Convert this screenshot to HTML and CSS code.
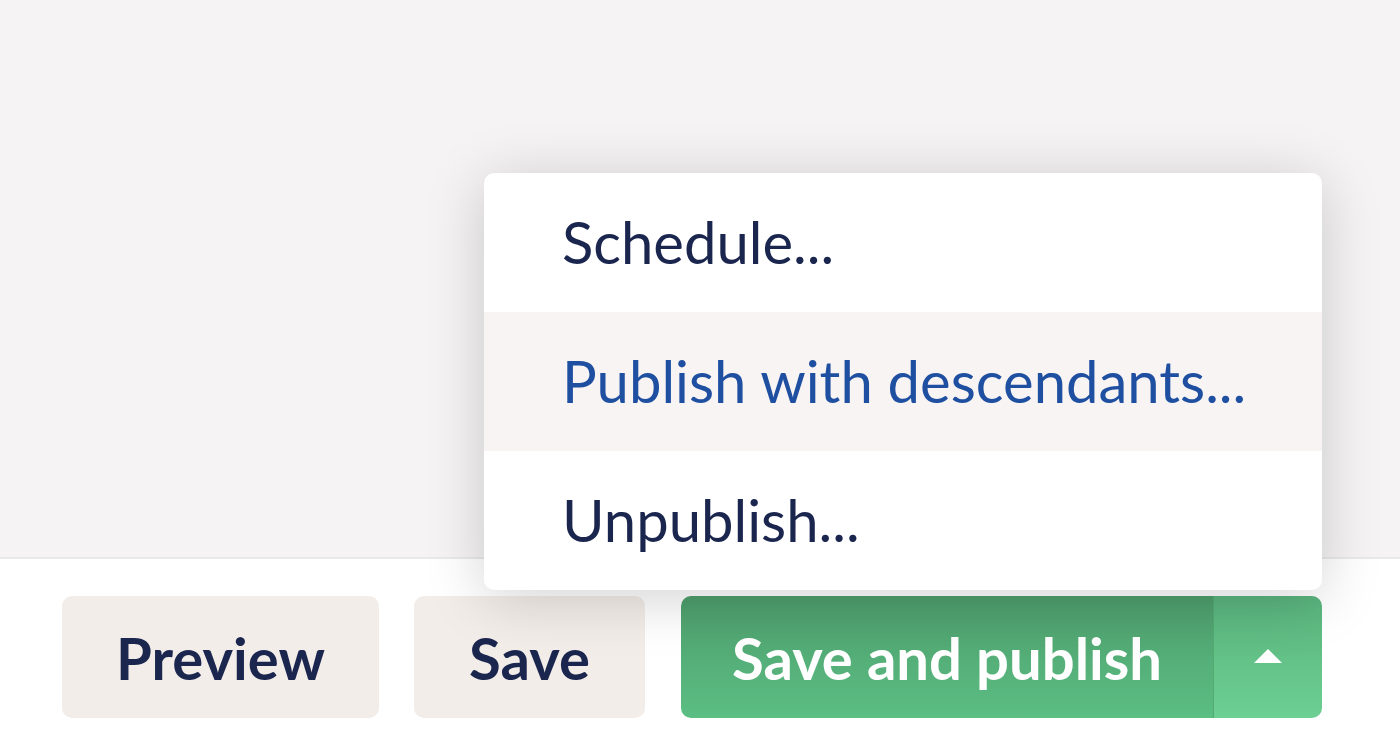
FILE: index.html
```html
<!DOCTYPE html>
<html lang="en">
<head>
    <meta charset="UTF-8">
    <meta name="viewport" content="width=device-width, initial-scale=1.0">
    <title>Editor</title>
    <link rel="stylesheet" href="styles.css">
</head>
<body>
    <div class="editor-body"></div>

    <footer class="editor-footer">
        <div class="button-row">
            <button class="btn btn-secondary btn-preview">Preview</button>
            <button class="btn btn-secondary btn-save">Save</button>
            <div class="btn-group">
                <button class="btn btn-success btn-main">Save and publish</button>
                <button class="btn btn-success btn-caret" aria-label="More publishing options">
                    <svg width="30" height="16" viewBox="0 0 30 16"><path d="M15 1 L29 15 L1 15 Z" fill="#fff"/></svg>
                </button>
            </div>
        </div>

        <ul class="dropdown">
            <li><a href="#">Schedule...</a></li>
            <li class="active"><a href="#">Publish with descendants...</a></li>
            <li><a href="#">Unpublish...</a></li>
        </ul>
    </footer>
</body>
</html>
```

FILE: styles.css
```css
body {
    font-family: Lato, "Open Sans", sans-serif;
    margin: 0;
    padding: 0;
    background-color: #fff;
    color: #1b264f;
    overflow: hidden;
}
.editor-body {
    height: 557px;
    background-color: #f5f3f4;
    border-bottom: 2px solid #e9e8ea;
}
.editor-footer {
    position: relative;
    height: 191px;
}
.button-row {
    display: flex;
    align-items: center;
    padding: 37px 78px 0 62px;
    gap: 35px;
}
.btn {
    font-family: inherit;
    font-size: 58px;
    font-weight: 700;
    height: 122px;
    border: none;
    border-radius: 10px;
    cursor: pointer;
}
.btn-secondary {
    background-color: #f3ede9;
    color: #1b264f;
}
.btn-preview {
    width: 317px;
}
.btn-save {
    width: 231px;
}
.btn-group {
    display: flex;
    margin-left: 1px;
}
.btn-success {
    color: #fff;
}
.btn-main {
    width: 533px;
    border-radius: 10px 0 0 10px;
    background: linear-gradient(#4e9e6c, #5bbe83);
    border-right: 1px solid #55aa73;
}
.btn-caret {
    width: 108px;
    border-radius: 0 10px 10px 0;
    background: linear-gradient(#5ab47d, #6ccf93);
    display: flex;
    align-items: center;
    justify-content: center;
    padding-bottom: 4px;
}
.dropdown {
    position: absolute;
    right: 78px;
    bottom: 160px;
    width: 838px;
    list-style-type: none;
    margin: 0;
    padding: 0;
    background-color: #fff;
    border-radius: 10px;
    box-shadow: 0 8px 60px rgba(0, 0, 0, 0.18);
    overflow: hidden;
}
.dropdown li a {
    display: flex;
    align-items: center;
    height: 139px;
    padding: 0 0 2px 78px;
    box-sizing: border-box;
    font-size: 58px;
    color: #1b264f;
    text-decoration: none;
}
.dropdown li.active a {
    background-color: #f8f4f3;
    color: #1f4fa0;
}
```
